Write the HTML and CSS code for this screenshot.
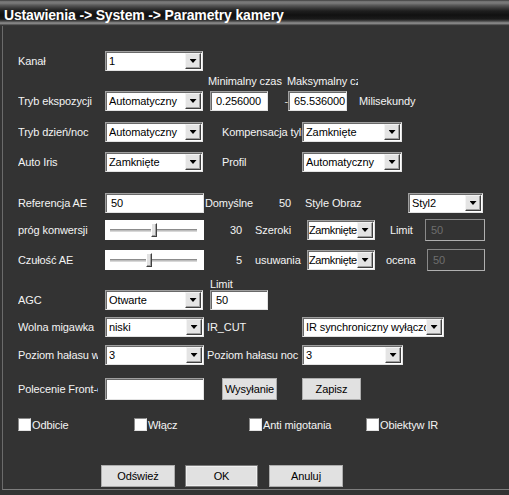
FILE: index.html
```html
<!DOCTYPE html>
<html lang="pl">
<head>
<meta charset="utf-8">
<title>Parametry kamery</title>
<link rel="stylesheet" href="styles.css">
</head>
<body>
<div class="title">Ustawienia -&gt; System -&gt; Parametry kamery</div>
<div class="panel">
  <div class="row row-kanal">
    <span class="lbl">Kanał</span>
    <div class="sel w98"><span class="val">1</span><span class="arr"></span></div>
  </div>
  <div class="row row-caps">
    <span class="cap-min">Minimalny czas</span>
    <span class="cap-max">Maksymalny czas</span>
  </div>
  <div class="row row-eksp">
    <span class="lbl">Tryb ekspozycji</span>
    <div class="sel w98"><span class="val">Automatyczny</span><span class="arr"></span></div>
    <input class="inp w58 ml7" type="text" value="0.256000">
    <span class="dash">-</span>
    <input class="inp w59" type="text" value="65.536000">
    <span class="unit">Milisekundy</span>
  </div>
  <div class="row row-dn">
    <span class="lbl">Tryb dzień/noc</span>
    <div class="sel w98"><span class="val">Automatyczny</span><span class="arr"></span></div>
    <span class="mid">Kompensacja tylnego światła</span>
    <div class="sel w100"><span class="val">Zamknięte</span><span class="arr"></span></div>
  </div>
  <div class="row row-iris">
    <span class="lbl">Auto Iris</span>
    <div class="sel w98"><span class="val">Zamknięte</span><span class="arr"></span></div>
    <span class="mid">Profil</span>
    <div class="sel w100"><span class="val">Automatyczny</span><span class="arr"></span></div>
  </div>
  <div class="row row-ae">
    <span class="lbl">Referencja AE</span>
    <input class="inp w99" type="text" value="50">
    <span class="def">Domyślne</span>
    <span class="defval">50</span>
    <span class="style-lbl">Style Obraz</span>
    <div class="sel w75"><span class="val">Styl2</span><span class="arr"></span></div>
  </div>
  <div class="row row-prog">
    <span class="lbl">próg konwersji</span>
    <div class="slider"><span class="track" style="width:41px"></span><span class="thumb"></span><span class="track track-rest"></span></div>
    <span class="num">30</span>
    <span class="opt">Szeroki</span>
    <div class="sel w68"><span class="val">Zamknięte</span><span class="arr"></span></div>
    <span class="lim">Limit</span>
    <input class="inp dis w60" type="text" value="50" disabled>
  </div>
  <div class="row row-czul">
    <span class="lbl">Czułość AE</span>
    <div class="slider"><span class="track" style="width:36px"></span><span class="thumb"></span><span class="track track-rest"></span></div>
    <span class="num">5</span>
    <span class="opt">usuwania</span>
    <div class="sel w68"><span class="val">Zamknięte</span><span class="arr"></span></div>
    <span class="ocena">ocena</span>
    <input class="inp dis w58" type="text" value="50" disabled>
  </div>
  <div class="row row-limcap">
    <span class="cap-lim">Limit</span>
  </div>
  <div class="row row-agc">
    <span class="lbl">AGC</span>
    <div class="sel w98"><span class="val">Otwarte</span><span class="arr"></span></div>
    <input class="inp w58 ml7" type="text" value="50">
  </div>
  <div class="row row-wolna">
    <span class="lbl">Wolna migawka</span>
    <div class="sel w99"><span class="val">niski</span><span class="arr"></span></div>
    <span class="mid2">IR_CUT</span>
    <div class="sel w142"><span class="val">IR synchroniczny wyłączony</span><span class="arr"></span></div>
  </div>
  <div class="row row-halas">
    <span class="lbl">Poziom hałasu w dzień</span>
    <div class="sel w99"><span class="val">3</span><span class="arr"></span></div>
    <span class="mid2">Poziom hałasu noc</span>
    <div class="sel w101"><span class="val">3</span><span class="arr"></span></div>
  </div>
  <div class="row row-front">
    <span class="lbl">Polecenie Front-end</span>
    <input class="inp w99 tall" type="text" value="">
    <button class="btn btn-send" type="button">Wysyłanie</button>
    <button class="btn btn-save" type="button">Zapisz</button>
  </div>
  <div class="row row-checks">
    <label class="chk chk1"><span class="cb"></span>Odbicie</label>
    <label class="chk chk2"><span class="cb"></span>Włącz</label>
    <label class="chk chk3"><span class="cb"></span>Anti migotania</label>
    <label class="chk"><span class="cb"></span>Obiektyw IR</label>
  </div>
  <div class="row row-buttons">
    <button class="btn btn-b1" type="button">Odśwież</button>
    <button class="btn btn-ok" type="button">OK</button>
    <button class="btn btn-b3" type="button">Anuluj</button>
  </div>
</div>
</body>
</html>
```
FILE: styles.css
```css
* { box-sizing: border-box; }
html, body { margin: 0; padding: 0; }
body {
  background: #333333;
  font-family: "Liberation Sans", Arial, sans-serif;
  font-size: 11px;
  letter-spacing: -0.1px;
  color: #f4f4f4;
  width: 509px;
  height: 495px;
  overflow: hidden;
}
.title {
  height: 26px;
  padding: 4px 0 0 4px;
  line-height: 22px;
  font-size: 14px;
  font-weight: bold;
  letter-spacing: -0.15px;
  color: #fff;
  white-space: nowrap;
  background: linear-gradient(#2e2e2e 0px, #6e6e6e 1px, #7c7c7c 3px, #5c5c5c 5px, #3a3a3a 8px, #1e1e1e 11px, #111 15px, #1a1a1a 19px, #444 21px, #8e8e8e 23px, #7a7a7a 24px, #3c3c3c 25px, #333 26px);
}
.panel {
  margin-left: 2px;
  border-left: 1px solid #6b6b6b;
  border-bottom: 1px solid #7d7d7d;
  height: 464px;
  padding-left: 15px;
  display: flex;
  flex-direction: column;
}
.row {
  display: flex;
  align-items: center;
  height: 20px;
  flex: none;
  white-space: nowrap;
}
.row > * { flex: none; }
.lbl { width: 80px; margin-right: 7px; overflow: hidden; }

.row-kanal { margin-top: 25px; }
.row-caps { margin-top: 2px; height: 16px; padding-left: 190px; }
.cap-min { width: 79px; }
.cap-max { width: 71px; overflow: hidden; }
.row-eksp { margin-top: 2px; }
.row-dn { margin-top: 11px; }
.row-iris { margin-top: 10px; }
.row-ae { margin-top: 21px; }
.row-prog { margin-top: 7px; }
.row-czul { margin-top: 10px; }
.row-limcap { margin-top: 9px; height: 11px; padding-left: 192px; align-items: flex-end; }
.row-agc { margin-top: 0; }
.row-wolna { margin-top: 7px; }
.row-halas { margin-top: 8px; }
.row-front { margin-top: 13px; height: 22px; }
.row-checks { margin-top: 18px; height: 13px; }
.row-buttons { margin-top: 34px; height: 22px; padding-left: 83px; }

/* select */
.sel {
  height: 20px;
  background: #fff;
  border: 1px solid;
  border-color: #a0a0a0 #e3e3e3 #e3e3e3 #a0a0a0;
  box-shadow: inset 1px 1px 0 #696969;
  display: flex;
  align-items: center;
  color: #000;
  padding-left: 3px;
}
.sel .val { flex: 1; overflow: hidden; min-width: 0; }
.arr {
  flex: none;
  width: 16px;
  height: 16px;
  margin-right: 1px;
  background: #e4e4e4;
  border: 1px solid;
  border-color: #f4f4f4 #404040 #404040 #f4f4f4;
  box-shadow: inset -1px -1px 0 #a0a0a0;
  display: flex;
  align-items: center;
  justify-content: center;
}
.arr::after {
  content: "";
  width: 7px;
  height: 4px;
  background: #000;
  clip-path: polygon(0 0, 100% 0, 50% 100%);
}
.w68 { width: 68px; }
.sel.w68 { padding-left: 1px; }
.sel.w68 .val { letter-spacing: -0.4px; }
.w75 { width: 75px; }
.w98 { width: 98px; }
.w99 { width: 99px; }
.w100 { width: 100px; }
.w101 { width: 101px; }
.w142 { width: 142px; }
.w58 { width: 58px; }
.w59 { width: 59px; }
.w60 { width: 60px; }

/* text input */
.inp {
  height: 20px;
  margin: 0;
  background: #fff;
  border: 1px solid;
  border-color: #a0a0a0 #e3e3e3 #e3e3e3 #a0a0a0;
  box-shadow: inset 1px 1px 0 #696969;
  color: #000;
  font: inherit;
  letter-spacing: inherit;
  padding: 0 0 0 5px;
  outline: none;
}
.inp.ml7 { margin-left: 7px; }
.inp.tall { height: 22px; }
.inp.dis {
  background: #333;
  border-color: #8a8a8a #b0b0b0 #b0b0b0 #8a8a8a;
  box-shadow: none;
  color: #6e6e6e;
  height: 22px;
}
.dash { width: 20px; text-align: right; color: #ddd; }
.unit { margin-left: 12px; }
.mid { width: 99px; padding-left: 19px; padding-right: 2px; overflow: hidden; }
.mid2 { width: 98px; padding-left: 3px; overflow: hidden; }
.def { width: 75px; padding-left: 1px; }
.defval { width: 26px; }
.style-lbl { width: 103px; }
.num { width: 51px; text-align: right; padding-right: 13px; }
.opt { width: 52px; }
.lim { width: 50px; padding-left: 15px; }
.ocena { width: 52px; padding-left: 11px; }
.cap-lim { line-height: 11px; }

/* slider */
.slider {
  width: 99px;
  height: 20px;
  background: #fff;
  display: flex;
  align-items: center;
  padding: 0 7px 0 5px;
}
.track {
  flex: none;
  height: 3px;
  border-top: 1px solid #8c8c8c;
  border-bottom: 1px solid #d8d8d8;
  background: #bdbdbd;
}
.track-rest { flex: 1; }
.thumb {
  flex: none;
  width: 6px;
  height: 14px;
  background: #e2e2e2;
  border: 1px solid;
  border-color: #fff #404040 #404040 #fff;
  box-shadow: inset -1px -1px 0 #a0a0a0;
}

/* buttons */
.btn {
  height: 22px;
  margin: 0;
  padding: 0;
  background: #e1e1e1;
  border: 1px solid #adadad;
  color: #000;
  font: inherit;
  letter-spacing: inherit;
}
.btn-send { width: 55px; margin-left: 18px; }
.btn-save { width: 59px; margin-left: 25px; }
.btn-b1 { width: 74px; }
.btn-ok { width: 73px; margin-left: 10px; border-color: #7a7a7a; box-shadow: inset 0 0 0 1px #efefef; }
.btn-b3 { width: 74px; margin-left: 11px; }

/* checkboxes */
.chk { display: flex; align-items: center; }
.chk1 { width: 116px; }
.chk2 { width: 115px; }
.chk3 { width: 117px; }
.cb {
  width: 13px;
  height: 13px;
  margin-right: 1px;
  background: #fff;
  border: 1px solid;
  border-color: #8a8a8a #e3e3e3 #e3e3e3 #8a8a8a;
}
```
